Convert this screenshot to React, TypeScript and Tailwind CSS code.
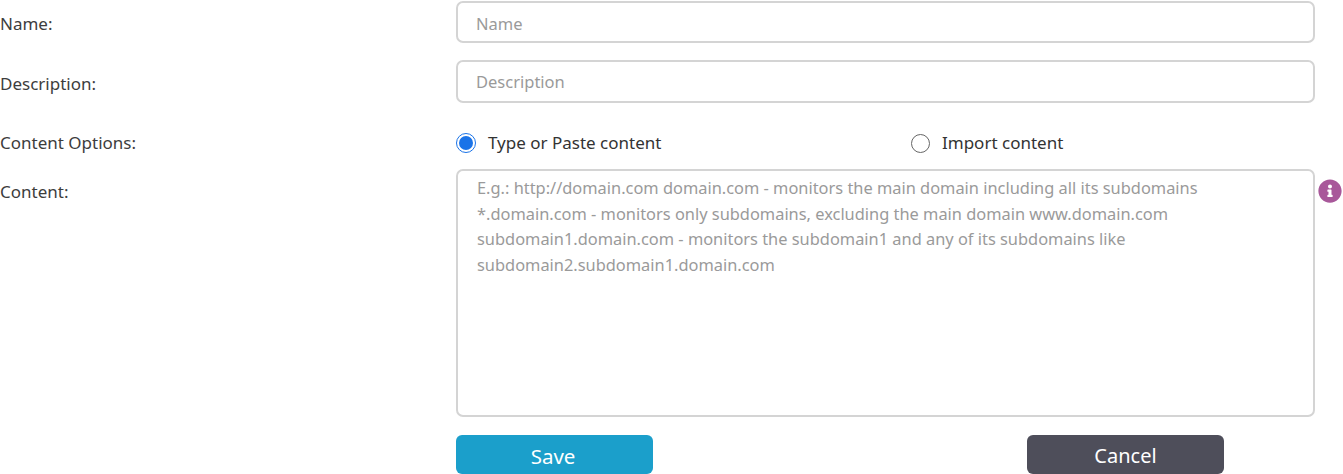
import { FaInfoCircle } from "react-icons/fa";

const font = "font-['Noto_Sans',sans-serif]";
const label = "w-[456px] shrink-0 text-[17px] leading-[24px] text-[#3d3d3d]";
const field =
  "w-[859px] rounded-[7px] border-2 border-[#d4d4d4] bg-white text-[#333] outline-none placeholder:text-[#9a9a9a]";

function Radio({ on }: { on?: boolean }) {
  return (
    <span
      className={
        "flex items-center justify-center rounded-full border " +
        (on ? "h-[20px] w-[20px] border-[#1a73e8]" : "h-[19px] w-[19px] border-[#666]")
      }
    >
      {on && <span className="h-[14px] w-[14px] rounded-full bg-[#1a73e8]" />}
    </span>
  );
}

export default function App() {
  return (
    <div className={"h-[474px] w-[1343px] overflow-hidden bg-white pt-px " + font}>
      <div className="flex h-[42px] items-center">
        <div className={label + " pt-[3px]"}>Name:</div>
        <input className={field + " h-[42px] px-[18px] pt-[2px] text-[16.5px]"} placeholder="Name" />
      </div>
      <div className="mt-[17px] flex h-[43px] items-center">
        <div className={label + " pt-[5px]"}>Description:</div>
        <input className={field + " h-[43px] px-[18px] text-[16.5px]"} placeholder="Description" />
      </div>
      <div className="mt-[27px] flex h-[26px] items-center">
        <div className={label}>Content Options:</div>
        <div className="flex w-[455px] items-center gap-[12px]">
          <Radio on />
          <span className="text-[17px] text-[#333]">Type or Paste content</span>
        </div>
        <div className="flex items-center gap-[12px]">
          <Radio />
          <span className="text-[17px] text-[#333]">Import content</span>
        </div>
      </div>
      <div className="mt-[13px] flex items-start">
        <div className={label + " pt-[11px]"}>Content:</div>
        <textarea
          className={field + " h-[248px] resize-none pb-[6px] pl-[19px] pr-[18px] pt-[4px] text-[16.4px] leading-[25.6px]"}
          placeholder={
            "E.g.: http://domain.com domain.com - monitors the main domain including all its subdomains\n*.domain.com - monitors only subdomains, excluding the main domain www.domain.com\nsubdomain1.domain.com - monitors the subdomain1 and any of its subdomains like\nsubdomain2.subdomain1.domain.com"
          }
        />
        <FaInfoCircle className="ml-[3px] mt-[10px] text-[24px] text-[#a8589a]" />
      </div>
      <div className="ml-[456px] mt-[18px] flex gap-[374px]">
        <button className="h-[39px] w-[197px] rounded-[6px] bg-[#1b9fcb] pr-[3px] pt-[3px] text-[20.5px] text-white">Save</button>
        <button className="h-[39px] w-[197px] rounded-[6px] bg-[#4e4e5a] pt-[3px] text-[20px] text-white">Cancel</button>
      </div>
    </div>
  );
}
